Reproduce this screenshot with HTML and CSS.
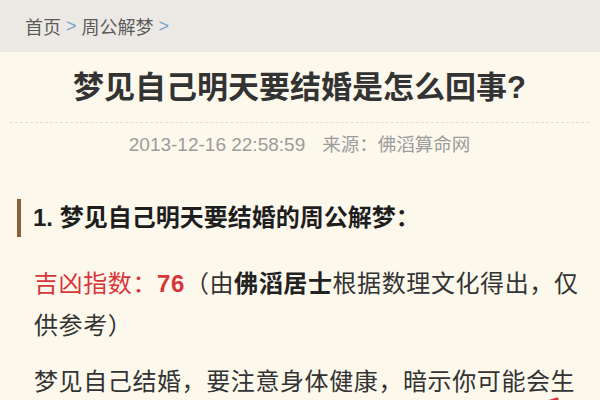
FILE: index.html
```html
<!DOCTYPE html>
<html lang="zh-CN">
<head>
<meta charset="utf-8">
<title>梦见自己明天要结婚是怎么回事?</title>
<link rel="stylesheet" href="styles.css">
</head>
<body>
<nav class="crumbs">
  <a class="crumb" href="#">首页</a><span class="sep">&gt;</span><a class="crumb" href="#">周公解梦</a><span class="sep">&gt;</span>
</nav>
<main class="article">
  <h1 class="title">梦见自己明天要结婚是怎么回事?</h1>
  <div class="rule"></div>
  <p class="meta"><span class="date">2013-12-16 22:58:59</span><span class="source">来源：佛滔算命网</span></p>
  <h2 class="section">1. 梦见自己明天要结婚的周公解梦：</h2>
  <p class="para"><span class="red">吉凶指数：</span><b class="score">76</b>（由<b>佛滔居士</b>根据数理文化得出，仅供参考）</p>
  <p class="para last">梦见自己结婚，要注意身体健康，暗示你可能会生<svg class="mark" width="30" height="14" viewBox="0 0 30 14"><path d="M3 11 C 10 8, 18 6, 25 4" stroke="#d8353b" stroke-width="3" fill="none" stroke-linecap="round"/></svg>病。</p>
</main>
</body>
</html>
```
FILE: styles.css
```css
html, body {
  margin: 0;
  padding: 0;
}
body {
  background: #fcf8ec;
  font-family: "Liberation Sans", "Noto Sans CJK SC", sans-serif;
  color: #333;
  width: 600px;
  height: 400px;
  overflow: hidden;
}
.crumbs {
  height: 52px;
  background: #ece9e4;
  display: flex;
  align-items: center;
  padding-left: 25px;
  font-size: 18px;
}
.crumb {
  color: #5a5a5a;
  text-decoration: none;
}
.sep {
  color: #6fa3c9;
  margin: 0 5px;
}
.article {
  padding: 16px 18px 0 17px;
}
.title {
  margin: 0;
  font-size: 31px;
  line-height: 40px;
  font-weight: bold;
  text-align: center;
  color: #333;
}
.rule {
  margin: 14px -7px 0 -7px;
  border-top: 1px dashed #e2ddd0;
}
.meta {
  margin: 10px 0 0;
  text-align: center;
  font-size: 19px;
  line-height: 24px;
  color: #9c9c9c;
}
.source {
  margin-left: 17px;
  font-size: 18.5px;
}
.section {
  margin: 42px 0 0;
  border-left: 4px solid #8d5f35;
  padding-left: 12px;
  height: 38px;
  line-height: 38px;
  font-size: 24px;
  font-weight: bold;
  color: #1e1e1e;
}
.para {
  margin: 26px 0 0;
  padding-left: 17px;
  font-size: 24px;
  letter-spacing: 0.6px;
  line-height: 42px;
  color: #333;
}
.para b {
  color: #222;
}
.para.last {
  margin-top: 14px;
  position: relative;
}
.red {
  color: #d8353b;
}
.para .score {
  color: #d8353b;
}
.mark {
  position: absolute;
  left: 515px;
  top: 34px;
}
```
